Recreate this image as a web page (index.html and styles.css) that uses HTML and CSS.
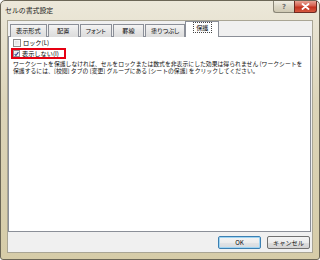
FILE: index.html
```html
<!DOCTYPE html>
<html lang="ja">
<head>
<meta charset="utf-8">
<link rel="stylesheet" href="styles.css">
</head>
<body>
<div class="window">
  <div class="titlebar">
    <span class="title">セルの書式設定</span>
    <div class="caption">
      <div class="cap-btn help">?</div>
      <div class="cap-btn close">
        <svg width="9" height="7" viewBox="0 0 9 7"><path d="M1.5 1 L7.5 6 M7.5 1 L1.5 6" stroke="#fff" stroke-width="1.8" stroke-linecap="round"/></svg>
      </div>
    </div>
  </div>
  <div class="client">
    <div class="tabs">
      <div class="tab">表示形式</div>
      <div class="tab">配置</div>
      <div class="tab">フォント</div>
      <div class="tab">罫線</div>
      <div class="tab">塗りつぶし</div>
      <div class="tab selected"><span class="focus">保護</span></div>
    </div>
    <div class="panel">
      <div class="check-row">
        <span class="checkbox"></span>
        <span class="label">ロック(L)</span>
      </div>
      <div class="check-row marked">
        <span class="checkbox checked">
          <svg width="6" height="6" viewBox="0 0 6 6"><path d="M0.8 3.2 L2.3 4.8 L5.3 0.8" fill="none" stroke="#2b3f8c" stroke-width="1.3"/></svg>
        </span>
        <span class="label">表示しない(I)</span>
      </div>
      <p class="note">ワークシートを保護しなければ、セルをロックまたは数式を非表示にした効果は得られません (ワークシートを保護するには、[校閲] タブの [変更] グループにある [シートの保護] をクリックしてください。</p>
    </div>
    <div class="buttons">
      <div class="btn default">OK</div>
      <div class="btn">キャンセル</div>
    </div>
  </div>
</div>
</body>
</html>
```

FILE: styles.css
```css
html, body {
  margin: 0;
  padding: 0;
  background: #ffffff;
}

body {
  font-family: "Noto Sans CJK JP", "Noto Sans", sans-serif;
  color: #000;
}

.window {
  box-sizing: border-box;
  width: 320px;
  height: 260px;
  border: 1px solid #6b6656;
  border-radius: 5px 5px 3px 3px;
  background: linear-gradient(#ece8da, #dcd4b8 40%, #d6cca8);
  padding: 0 6px 6px 6px;
  display: flex;
  flex-direction: column;
}

.titlebar {
  height: 19px;
  display: flex;
  justify-content: space-between;
  align-items: flex-start;
  flex: none;
}

.title {
  font-size: 6.9px;
  line-height: 7px;
  margin-top: 6px;
  margin-left: -2px;
  color: #1a1a1a;
}

.caption {
  display: flex;
  margin-right: -4px;
}

.cap-btn {
  box-sizing: border-box;
  height: 12px;
  display: flex;
  align-items: center;
  justify-content: center;
}

.help {
  width: 21px;
  border: 1px solid #8a8677;
  border-top: none;
  border-right: none;
  border-radius: 0 0 0 3px;
  background: linear-gradient(#f1eee4, #dcd7c6 50%, #cfc9b3);
  font-family: "DejaVu Sans", sans-serif;
  font-size: 7px;
  color: #6f6f6f;
  font-weight: bold;
}

.close {
  width: 23px;
  border: 1px solid #6e2a22;
  border-top: none;
  border-radius: 0 0 3px 0;
  background: linear-gradient(#e8a394, #d45e4c 45%, #c2321f 55%, #d5583f);
}

.client {
  flex: 1;
  background: #f0f0f0;
  border: 1px solid #a9a594;
  display: flex;
  flex-direction: column;
  padding: 0 1px 0 0;
}

.tabs {
  display: flex;
  align-items: flex-end;
  padding: 1px 0 0 2px;
  height: 16px;
  box-sizing: border-box;
  position: relative;
  z-index: 1;
  margin-bottom: -1px;
}

.tab {
  box-sizing: border-box;
  height: 13px;
  min-width: 31px;
  padding: 0 5px;
  margin-right: 1px;
  border: 1px solid #8b8f98;
  border-bottom: none;
  background: linear-gradient(#f4f4f4, #e6e6e6 50%, #dcdcdc);
  font-size: 6.2px;
  font-feature-settings: "palt";
  line-height: 11px;
  text-align: center;
  color: #111;
  white-space: nowrap;
}

.tab.selected {
  height: 16px;
  background: #ffffff;
  margin-left: -1px;
  padding: 0 5px;
  min-width: 34px;
  line-height: 12px;
}

.focus {
  outline: 1px dotted #444;
  outline-offset: 0;
  padding: 0 2px;
}

.panel {
  flex: none;
  height: 196px;
  box-sizing: border-box;
  background: #ffffff;
  border: 1px solid #8b8f98;
  padding: 1px 4px 0 4px;
}

.check-row {
  display: flex;
  align-items: center;
  height: 9px;
  gap: 2px;
}

.check-row.marked {
  box-sizing: border-box;
  width: 55px;
  height: 11px;
  border: 2px solid #e60012;
  margin: 1px 0 0 -2px;
  padding-left: 0;
}

.checkbox {
  box-sizing: border-box;
  width: 8px;
  height: 8px;
  border: 1px solid #8f8f8f;
  background: linear-gradient(135deg, #dcdcdc, #f6f6f6);
  box-shadow: inset 0 0 0 1px #f4f4f4;
  display: flex;
  align-items: center;
  justify-content: center;
  flex: none;
}

.checkbox.checked {
  width: 7px;
  height: 7px;
}

.label {
  font-size: 6.2px;
  line-height: 7px;
  white-space: nowrap;
}

.note {
  margin: 2px 0 0 0;
  font-size: 5.85px;
  line-height: 6.6px;
  color: #111;
}

.buttons {
  flex: 1;
  display: flex;
  justify-content: flex-end;
  align-items: flex-start;
  gap: 6px;
  padding: 4px 1px 0 0;
}

.btn {
  box-sizing: border-box;
  width: 43px;
  height: 13px;
  border: 1px solid #707070;
  border-radius: 2px;
  background: linear-gradient(#f4f4f4, #ececec 50%, #dedede 51%, #d2d2d2);
  font-size: 6.2px;
  line-height: 11px;
  text-align: center;
  color: #111;
}

.btn.default {
  border-color: #3c7fb1;
  box-shadow: inset 0 0 0 1px #9fd5f4;
  background: linear-gradient(#f4f4f4, #ececec 50%, #e2e4e6 51%, #d6dade);
}
```
